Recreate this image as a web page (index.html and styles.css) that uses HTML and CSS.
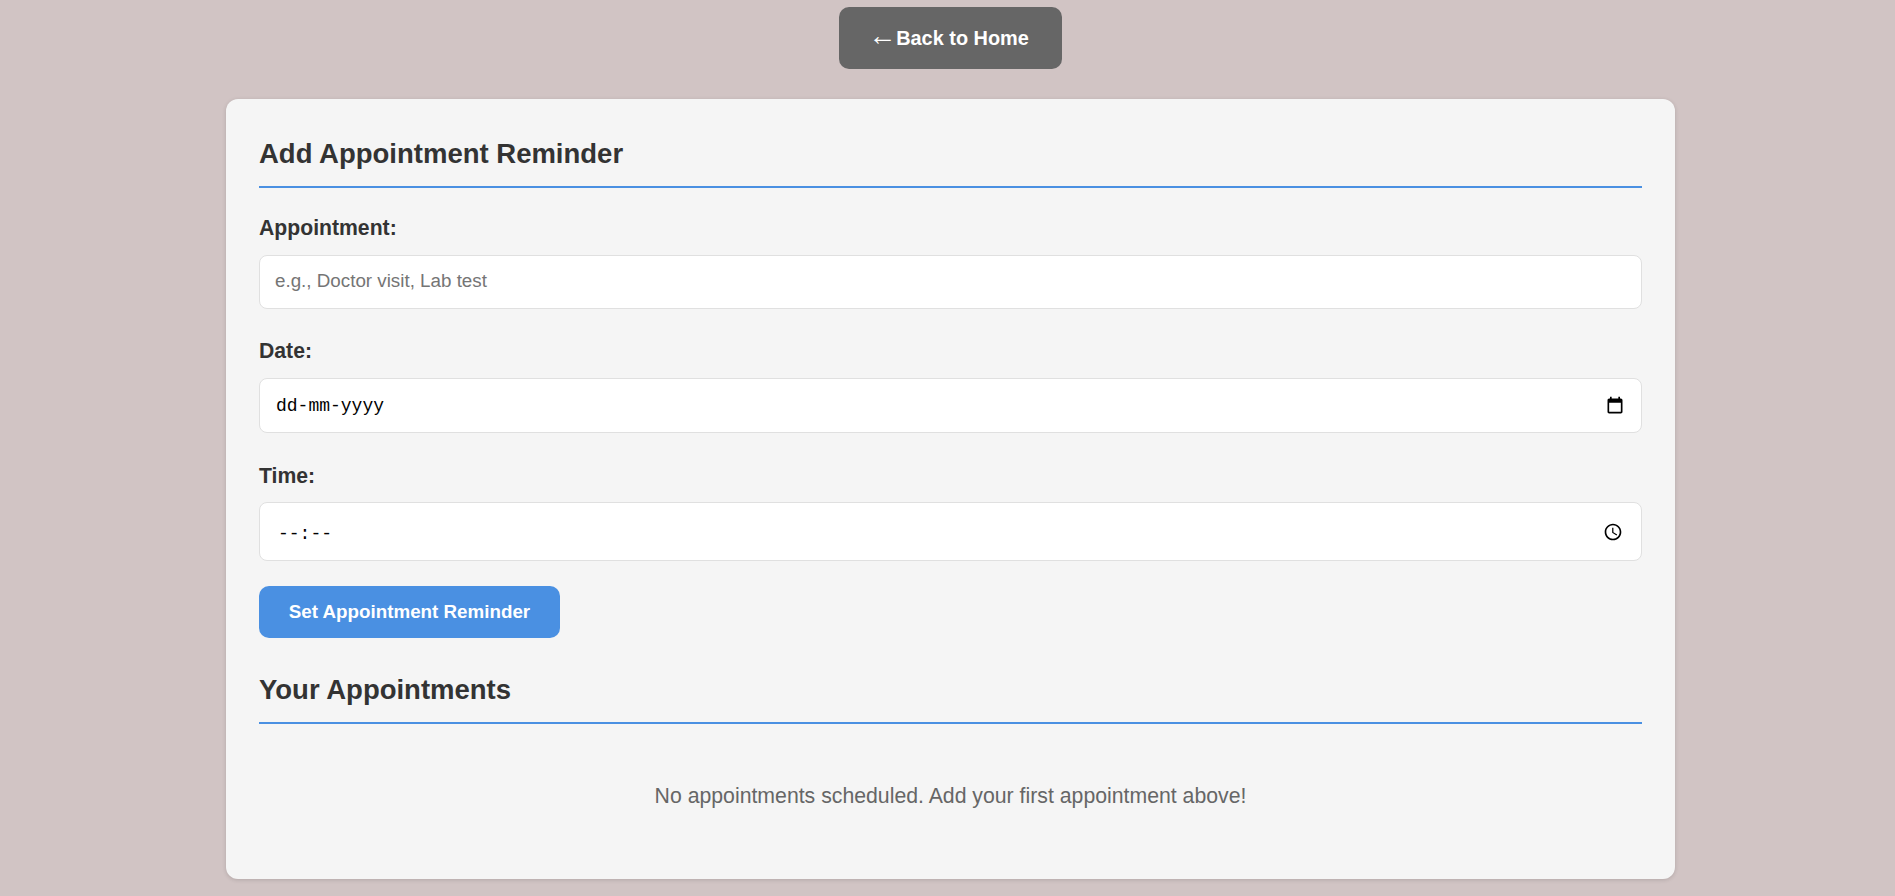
FILE: index.html
```html
<!DOCTYPE html>
<html lang="en">
<head>
<meta charset="utf-8">
<title>Appointment Reminders</title>
<link rel="stylesheet" href="styles.css">
</head>
<body>
<div class="top"><a class="back" href="#"><span class="arrow">←</span> Back to Home</a></div>
<main class="card">
  <h2 class="heading">Add Appointment Reminder</h2>
  <form class="form">
    <div class="group">
      <label class="label" for="a">Appointment:</label>
      <input class="field field-text" id="a" type="text" placeholder="e.g., Doctor visit, Lab test">
    </div>
    <div class="group group-date">
      <span class="label">Date:</span>
      <div class="field field-date">
        <span class="mono">dd-mm-yyyy</span>
        <svg class="icon" viewBox="0 0 24 24" aria-hidden="true"><path d="M19 3h-1V1h-2v2H8V1H6v2H5c-1.11 0-1.99.9-1.99 2L3 19c0 1.1.89 2 2 2h14c1.1 0 2-.9 2-2V5c0-1.1-.9-2-2-2zm0 16H5V8h14v11z"/></svg>
      </div>
    </div>
    <div class="group group-last">
      <span class="label label-time">Time:</span>
      <div class="field field-time">
        <span class="mono mono-time">--:--</span>
        <svg class="icon" viewBox="0 0 24 24" aria-hidden="true"><path d="M11.99 2C6.47 2 2 6.48 2 12s4.47 10 9.99 10C17.52 22 22 17.52 22 12S17.52 2 11.99 2zM12 20c-4.42 0-8-3.58-8-8s3.58-8 8-8 8 3.58 8 8-3.58 8-8 8zm.5-13H11v6l5.25 3.15.75-1.23-4.5-2.67z"/></svg>
      </div>
    </div>
    <button class="submit" type="button">Set Appointment Reminder</button>
  </form>
  <h2 class="heading second">Your Appointments</h2>
  <p class="empty">No appointments scheduled. Add your first appointment above!</p>
</main>
</body>
</html>
```
FILE: styles.css
```css
* { box-sizing: border-box; }
html, body { margin: 0; padding: 0; }
body {
  background: #d1c4c4;
  font-family: "Liberation Sans", Arial, sans-serif;
  color: #333;
  min-height: 896px;
  overflow: hidden;
  padding-left: 6px;
}
.top { display: flex; justify-content: center; padding-top: 7px; }
.back {
  display: block;
  width: 223px;
  height: 62px;
  padding-right: 4px;
  line-height: 62px;
  text-align: center;
  background: #666;
  color: #fff;
  font-weight: 700;
  font-size: 19.9px;
  border-radius: 10px;
  text-decoration: none;
}
.arrow { font-weight: 400; font-size: 28px; line-height: 1; letter-spacing: -5.5px; }
.card {
  width: 1449px;
  height: 780px;
  margin: 30px auto 0;
  background: #f5f5f5;
  border-radius: 12px;
  padding: 33px;
  box-shadow: 0 1px 4px rgba(0,0,0,.15);
}
.heading {
  margin: 0;
  height: 56px;
  font-size: 27.5px;
  line-height: 43px;
  font-weight: 700;
  color: #333;
  border-bottom: 2px solid #4a90e2;
}
.form { margin-top: 28px; }
.group { margin-bottom: 30px; }
.group-date { margin-bottom: 31px; }
.group-last { margin-bottom: 25px; }
.label { display: block; font-weight: 700; font-size: 21.2px; line-height: 24px; margin-bottom: 15px; }
.label-time { margin-bottom: 14px; }
.field {
  display: flex;
  align-items: center;
  justify-content: space-between;
  width: 100%;
  padding: 0 15px;
  font-size: 18.8px;
  border: 1px solid #e0e0e0;
  border-radius: 8px;
  background: #fff;
}
.field-text { height: 54px; font-family: inherit; color: #333; padding-bottom: 2px; }
.field-date { height: 55px; padding-right: 16.5px; }
.field-time { height: 59px; padding-right: 18.5px; }
.field::placeholder { color: #757575; }
.mono { font: 18px "Liberation Mono", monospace; color: #000; padding-left: 1px; }
.mono-time { padding: 4px 0 0 3px; }
.icon { display: block; width: 20px; height: 20px; }
.submit {
  display: block;
  width: 301px;
  height: 52px;
  background: #4a90e2;
  color: #fff;
  border: 0;
  border-radius: 10px;
  font: 700 18.8px "Liberation Sans", Arial, sans-serif;
}
.second { margin-top: 30px; }
.empty { margin: 60px 0 0; text-align: center; font-size: 21.25px; line-height: 24px; color: #666; }
```
